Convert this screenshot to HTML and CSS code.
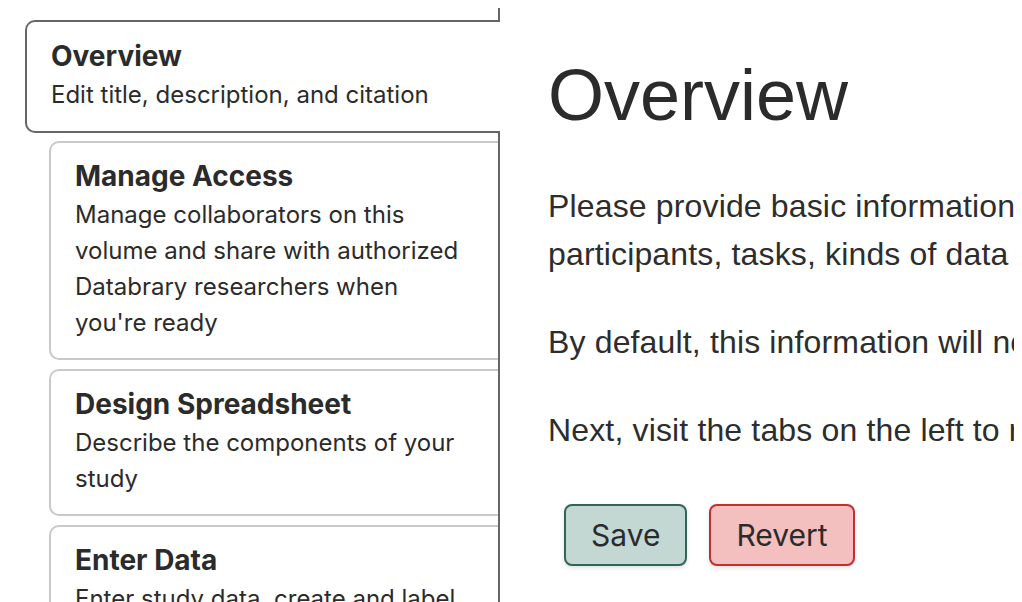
FILE: index.html
```html
<!DOCTYPE html>
<html lang="en">
<head>
<meta charset="utf-8">
<title>Overview</title>
<link rel="stylesheet" href="styles.css">
</head>
<body>
<div class="layout">
  <nav class="sidebar">
    <div class="tab tab-active">
      <div class="tab-title">Overview</div>
      <div class="tab-desc">Edit title, description, and citation</div>
    </div>
    <div class="tab">
      <div class="tab-title">Manage Access</div>
      <div class="tab-desc">Manage collaborators on this volume and share with authorized Databrary researchers when you're ready</div>
    </div>
    <div class="tab">
      <div class="tab-title">Design Spreadsheet</div>
      <div class="tab-desc">Describe the components of your study</div>
    </div>
    <div class="tab">
      <div class="tab-title">Enter Data</div>
      <div class="tab-desc">Enter study data, create and label sessions, and upload files</div>
    </div>
  </nav>
  <main class="content">
    <h1 class="page-title">Overview</h1>
    <p class="text">Please provide basic information about your volume, such as the<br>participants, tasks, kinds of data collected, and how it should be cited.</p>
    <p class="text">By default, this information will not be shared publicly until you choose to share it.</p>
    <p class="text">Next, visit the tabs on the left to review and manage the rest of your volume.</p>
    <div class="actions">
      <button class="btn btn-save" type="button">Save</button>
      <button class="btn btn-revert" type="button">Revert</button>
    </div>
  </main>
</div>
</body>
</html>
```

FILE: styles.css
```css
html {
  height: 100%;
  overflow: hidden;
}
body {
  height: 100%;
  margin: 8px;
  background: #ffffff;
  color: #2b2b2b;
}
.layout {
  display: flex;
  align-items: stretch;
  min-height: 100%;
}
.sidebar {
  flex: 0 0 492px;
  box-sizing: border-box;
  border-right: 2px solid #666666;
  padding-top: 12px;
  font-family: Inter, "Noto Sans", sans-serif;
  color: #2b2b2b;
}
.tab {
  margin: 0 0 9px 41px;
  padding: 14px 30px 17px 24px;
  border: 2px solid #c9c9c9;
  border-right: none;
  border-radius: 10px 0 0 10px;
  background: #ffffff;
}
.tab-active {
  margin-left: 17px;
  margin-right: -2px;
  margin-bottom: 8px;
  padding-top: 15px;
  padding-bottom: 18px;
  border-color: #666666;
}
.tab-title {
  font-size: 28px;
  font-weight: 700;
  line-height: 38px;
  margin-bottom: 2px;
}
.tab-desc {
  font-size: 24px;
  line-height: 36px;
}
.content {
  flex: 0 0 auto;
  width: 1100px;
  padding-left: 48px;
  font-family: "Liberation Sans", Arial, sans-serif;
  color: #2d2d2d;
}
.page-title {
  margin: 44px 0 44px;
  font-size: 72px;
  line-height: 86px;
  font-weight: 400;
  color: #2b2b2b;
}
.text {
  margin: 0 0 40px;
  font-size: 32px;
  line-height: 48px;
  letter-spacing: 0.15px;
  white-space: nowrap;
}
.actions {
  display: flex;
  gap: 22px;
  padding-left: 16px;
  margin-top: 50px;
}
.btn {
  height: 62px;
  padding: 0 25px;
  border-radius: 8px;
  border: 2px solid;
  font-family: Inter, "Noto Sans", sans-serif;
  font-size: 30px;
  color: #2b2b2b;
  box-shadow: 0 2px 4px rgba(0, 0, 0, 0.12);
}
.btn-save {
  background: #c4d8d3;
  border-color: #2f6657;
}
.btn-revert {
  background: #f3bfbf;
  border-color: #c2302c;
}
```
